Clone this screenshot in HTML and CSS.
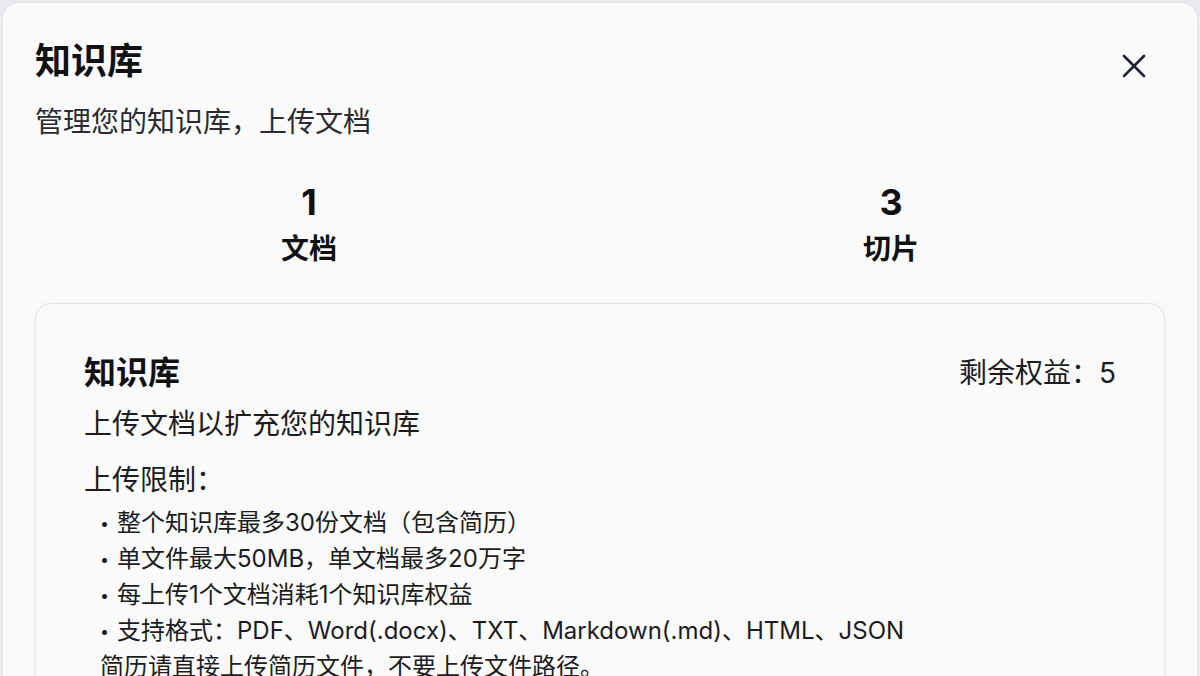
FILE: index.html
```html
<!DOCTYPE html>
<html lang="zh-CN">
<head>
<meta charset="utf-8">
<title>知识库</title>
<link rel="stylesheet" href="styles.css">
</head>
<body>
<div class="dialog">
  <header class="dialog-header">
    <div class="titles">
      <h1 class="dialog-title">知识库</h1>
      <p class="dialog-subtitle">管理您的知识库，上传文档</p>
    </div>
    <button class="close-btn" aria-label="关闭">
      <svg width="24" height="24" viewBox="0 0 24 24" fill="none" stroke="currentColor" stroke-width="2.6" stroke-linecap="round" stroke-linejoin="round"><path d="M22 2 2 22"/><path d="M2 2 22 22"/></svg>
    </button>
  </header>

  <div class="stats">
    <div class="stat">
      <div class="stat-num">1</div>
      <div class="stat-label">文档</div>
    </div>
    <div class="stat">
      <div class="stat-num">3</div>
      <div class="stat-label">切片</div>
    </div>
  </div>

  <section class="card">
    <div class="card-head">
      <h2 class="card-title">知识库</h2>
      <div class="quota">剩余权益：5</div>
    </div>
    <p class="card-desc">上传文档以扩充您的知识库</p>
    <p class="limit-title">上传限制：</p>
    <ul class="limits">
      <li><span class="dot">•</span>整个知识库最多30份文档（包含简历）</li>
      <li><span class="dot">•</span>单文件最大50MB，单文档最多20万字</li>
      <li><span class="dot">•</span>每上传1个文档消耗1个知识库权益</li>
      <li><span class="dot">•</span>支持格式：PDF、Word(.docx)、TXT、Markdown(.md)、HTML、JSON</li>
    </ul>
    <p class="note">简历请直接上传简历文件，不要上传文件路径。</p>
  </section>
</div>
</body>
</html>
```

FILE: styles.css
```css
* { box-sizing: border-box; }

html, body {
  margin: 0;
  padding: 0;
  height: 100%;
  overflow: hidden;
}

body {
  background: #e8eaef;
  font-family: "Inter", "Noto Sans CJK SC", sans-serif;
  color: #1c1c20;
}

.dialog {
  margin: 2px 2px 0 2px;
  min-height: 700px;
  background: #fafafb;
  border: 1px solid #e3e5ea;
  border-radius: 16px;
  padding: 36px 32px 0 32px;
}

.dialog-header {
  display: flex;
  justify-content: space-between;
  align-items: flex-start;
}

.dialog-title {
  margin: 0;
  font-size: 36px;
  line-height: 44px;
  font-weight: 700;
  color: #111114;
}

.dialog-subtitle {
  margin: 19px 0 0 0;
  font-size: 28px;
  line-height: 40px;
  color: #2a2a30;
}

.close-btn {
  margin: 15px 19px 0 0;
  padding: 0;
  width: 24px;
  height: 24px;
  border: none;
  background: transparent;
  color: #1f2430;
  display: flex;
  overflow: visible;
}

.close-btn svg {
  overflow: visible;
}

.stats {
  display: grid;
  grid-template-columns: 1fr 1fr;
  column-gap: 34px;
  margin-top: 38px;
  text-align: center;
}

.stat-num {
  font-size: 36px;
  line-height: 44px;
  font-weight: 700;
  color: #111114;
}

.stat-label {
  margin-top: 5px;
  font-size: 28px;
  line-height: 40px;
  font-weight: 700;
  color: #111114;
}

.card {
  margin-top: 34px;
  background: #fafafb;
  border: 1px solid #e3e4e9;
  border-radius: 16px;
  box-shadow: 0 1px 4px rgba(0, 0, 0, 0.07);
  padding: 49px 48px 40px 48px;
}

.card-head {
  display: flex;
  justify-content: space-between;
  align-items: center;
}

.card-title {
  margin: 0;
  font-size: 32px;
  line-height: 40px;
  font-weight: 700;
  color: #111114;
}

.quota {
  font-size: 28px;
  line-height: 40px;
  color: #1c1c20;
}

.card-desc {
  margin: 11px 0 0 0;
  font-size: 28px;
  line-height: 40px;
  color: #1c1c20;
}

.limit-title {
  margin: 16px 0 0 0;
  font-size: 28px;
  line-height: 40px;
  color: #1c1c20;
}

.limits {
  list-style: none;
  margin: 5px 0 0 0;
  padding: 0 0 0 16px;
}

.limits li {
  font-size: 24px;
  line-height: 36px;
  color: #1c1c20;
}

.dot {
  display: inline-block;
  width: 17px;
  font-size: 16px;
  vertical-align: top;
}

.note {
  margin: 0;
  padding-left: 16px;
  font-size: 24px;
  line-height: 36px;
  color: #1c1c20;
}
```
